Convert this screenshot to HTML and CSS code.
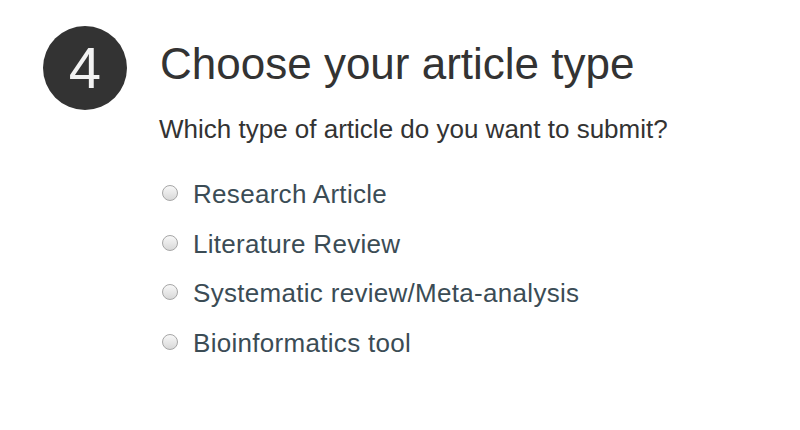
FILE: index.html
```html
<!DOCTYPE html>
<html>
<head>
<meta charset="utf-8">
<link rel="stylesheet" href="styles.css">
</head>
<body>
<section class="step">
  <div class="badge">4</div>
  <div class="content">
    <h2 class="title">Choose your article type</h2>
    <p class="question">Which type of article do you want to submit?</p>
    <ul class="options">
      <li class="option"><span class="radio"></span><span class="label">Research Article</span></li>
      <li class="option"><span class="radio"></span><span class="label">Literature Review</span></li>
      <li class="option"><span class="radio"></span><span class="label">Systematic review/Meta-analysis</span></li>
      <li class="option"><span class="radio"></span><span class="label">Bioinformatics tool</span></li>
    </ul>
  </div>
</section>
</body>
</html>
```
FILE: styles.css
```css
html, body {
  margin: 0;
  padding: 0;
  background: #ffffff;
}
body {
  font-family: "Liberation Sans", Arial, Helvetica, sans-serif;
  color: #333333;
}
.step {
  display: flex;
  align-items: flex-start;
  padding: 26px 0 0 43px;
  gap: 33px;
}
.badge {
  flex: none;
  width: 84px;
  height: 84px;
  border-radius: 50%;
  background: #333333;
  color: #f2f2f2;
  font-size: 58px;
  line-height: 84px;
  text-align: center;
}
.content {
  display: flex;
  flex-direction: column;
}
.title {
  margin: 12px 0 0 0;
  font-size: 44px;
  font-weight: normal;
  line-height: 52px;
  color: #333333;
}
.question {
  margin: 24px 0 0 -1px;
  font-size: 26px;
  line-height: 30px;
  color: #333333;
}
.options {
  list-style: none;
  margin: 35px 0 0 0;
  padding: 0;
  display: flex;
  flex-direction: column;
  gap: 19.6px;
}
.option {
  display: flex;
  align-items: center;
  height: 30px;
}
.radio {
  flex: none;
  box-sizing: border-box;
  width: 16px;
  height: 16px;
  border-radius: 50%;
  border: 1px solid #a6a6a6;
  background: linear-gradient(#f8f8f8, #d8d8d8);
  margin-left: 2px;
  margin-right: 15px;
  position: relative;
  top: -1px;
}
.label {
  font-size: 26px;
  line-height: 30px;
  letter-spacing: 0.3px;
  color: #3b4c55;
}
```
